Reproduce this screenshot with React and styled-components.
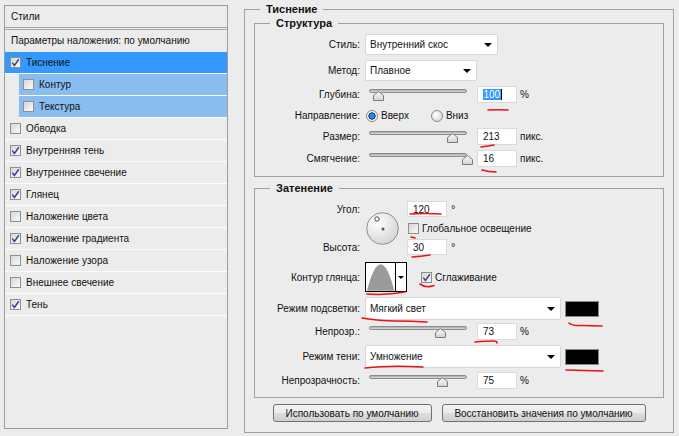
import React from 'react';
import styled, { createGlobalStyle } from 'styled-components';

const GlobalStyle = createGlobalStyle`
  html, body {
    margin: 0;
    padding: 0;
    background: #ececec;
  }
  body {
    font-family: "Liberation Sans", Arial, sans-serif;
    font-size: 10px;
    color: #111;
  }
  #root {
    width: 679px;
    height: 436px;
    overflow: hidden;
  }
`;

const EFFECTS = [
  { label: 'Тиснение', checked: true, active: true },
  { label: 'Контур', checked: false, sub: true },
  { label: 'Текстура', checked: false, sub: true },
  { label: 'Обводка', checked: false },
  { label: 'Внутренняя тень', checked: true },
  { label: 'Внутреннее свечение', checked: true },
  { label: 'Глянец', checked: true },
  { label: 'Наложение цвета', checked: false },
  { label: 'Наложение градиента', checked: true },
  { label: 'Наложение узора', checked: false },
  { label: 'Внешнее свечение', checked: false },
  { label: 'Тень', checked: true },
];

// red hand-drawn marks over the screenshot
const MARKS = [
  'M488 110 Q498 109.5 508 110',
  'M481 147 Q488 146 494 145',
  'M482 170 Q489 172 496 172',
  'M410 214 Q426 213 441 214',
  'M411 237 L415 238',
  'M412 257 Q421 256.5 430 255',
  'M420 284 Q426 288.5 434 285.5',
  'M367 294 Q386 295.5 405 292',
  'M362 318 Q380 321 395 321 Q412 321 427 322',
  'M569 323 Q572 326 582 325.5 L602 326',
  'M475 342 Q487 341 494 341 Q497 341 497 343',
  'M365 368 Q390 365 423 367',
  'M566 370 L603 371',
];

const Page = styled.div`
  position: relative;
  display: flex;
  align-items: flex-start;
  gap: 16px;
  width: 679px;
  height: 436px;
  box-sizing: border-box;
  padding: 2px 5px 0 4px;
`;

/* ---------- left list ---------- */

const StylesPanel = styled.div`
  width: 224px;
  height: 424px;
  margin-top: 3px;
  box-sizing: border-box;
  border: 1px solid #9c9c9c;
  flex-shrink: 0;
`;

const PanelHeader = styled.div`
  height: 21px;
  line-height: 21px;
  padding-left: 6px;
  border-bottom: 3px double #a4a4a4;
`;

const PresetRow = styled.div`
  height: 22px;
  line-height: 22px;
  padding-left: 6px;
`;

const EffectRow = styled.div`
  display: flex;
  align-items: center;
  gap: 5px;
  height: 21px;
  border-bottom: 1px solid #fbfbfb;
  margin-left: ${p => (p.$sub ? '14px' : '0')};
  padding-left: ${p => (p.$sub ? '4px' : '5px')};
  background: ${p => (p.$active ? '#3399ff' : p.$sub ? '#89bdf0' : 'transparent')};
`;

const Box = styled.span`
  display: inline-flex;
  align-items: center;
  justify-content: center;
  width: 11px;
  height: 11px;
  box-sizing: border-box;
  border: 1px solid #8e8f8f;
  background: linear-gradient(135deg, #d6d6d6, #fbfbfb);
  flex-shrink: 0;
`;

function Checkbox({ checked }) {
  return (
    <Box>
      {checked && (
        <svg width="9" height="9" viewBox="0 0 9 9">
          <path d="M1.3 4.6 L3.4 7.4 L7.8 1.2" fill="none" stroke="#33419a" strokeWidth="1.5" />
        </svg>
      )}
    </Box>
  );
}

/* ---------- right side ---------- */

const Group = styled.fieldset`
  margin: ${p => p.$margin || '0'};
  padding: ${p => p.$pad};
  border: 1px solid #a0a0a0;
  min-width: 0;
  box-sizing: border-box;
  width: ${p => p.$width || 'auto'};
  flex-shrink: 0;
`;

const Legend = styled.legend`
  font-weight: bold;
  font-size: 11px;
  line-height: 14px;
  padding: 0 6px;
  margin-left: ${p => p.$offset}px;
`;

const Row = styled.div`
  display: flex;
  align-items: center;
  height: ${p => p.$h}px;
  margin-top: ${p => p.$mt || 0}px;
`;

const Label = styled.span`
  width: 105px;
  padding-right: 5px;
  text-align: right;
  flex-shrink: 0;
  white-space: nowrap;
`;

const Dropdown = styled.div`
  display: flex;
  align-items: center;
  justify-content: space-between;
  width: ${p => p.$w}px;
  height: ${p => p.$h}px;
  box-sizing: border-box;
  padding: 0 4px 0 4px;
  background: #fff;
  border: 1px solid #d6d6d6;
  border-radius: 2px;
`;

const Arrow = styled.span`
  width: 0;
  height: 0;
  border-left: 4px solid transparent;
  border-right: 4px solid transparent;
  border-top: 4px solid #000;
  margin-right: 1px;
`;

function Select({ value, w, h = 21 }) {
  return (
    <Dropdown $w={w} $h={h}>
      <span>{value}</span>
      <Arrow />
    </Dropdown>
  );
}

const NumField = styled.div`
  display: flex;
  align-items: center;
  width: 40px;
  height: ${p => p.$h || 17}px;
  box-sizing: border-box;
  padding-left: 5px;
  background: #fff;
  border: 1px solid #dadada;
  flex-shrink: 0;
`;

const Selected = styled.span`
  background: #3399ff;
  color: #fff;
  padding: 0 0.5px;
`;

const Caret = styled.span`
  width: 1px;
  height: 11px;
  background: #000;
`;

const Unit = styled.span`
  margin-left: 3px;
`;

const SliderBox = styled.div`
  position: relative;
  width: 112px;
  height: 17px;
  flex-shrink: 0;
`;

const Track = styled.div`
  width: 98px;
  height: 4px;
  margin: 3px 0 0 4px;
  border: 1px solid #8c8c8c;
  border-radius: 3px;
  box-sizing: border-box;
  background: linear-gradient(#a9a9a9, #dedede);
`;

const Thumb = styled.svg`
  position: absolute;
  top: 5px;
`;

function Slider({ value, max }) {
  const center = 4 + (value / max) * 98;
  return (
    <SliderBox>
      <Track />
      <Thumb width="11" height="10" viewBox="0 0 11 10" style={{ left: `${center - 5.5}px` }}>
        <defs>
          <linearGradient id="thumbFill" x1="0" y1="0" x2="0" y2="1">
            <stop offset="0" stopColor="#fdfdfd" />
            <stop offset="1" stopColor="#d2d2d2" />
          </linearGradient>
        </defs>
        <polygon points="5.5,0.5 10.5,4.5 10.5,9.5 0.5,9.5 0.5,4.5" fill="url(#thumbFill)" stroke="#7d7d7d" />
      </Thumb>
    </SliderBox>
  );
}

function SliderRow({ label, value, max, unit, mt, selected }) {
  return (
    <Row $h={17} $mt={mt}>
      <Label>{label}</Label>
      <Slider value={value} max={max} />
      <NumField>
        {selected ? (
          <>
            <Selected>{value}</Selected>
            <Caret />
          </>
        ) : (
          value
        )}
      </NumField>
      <Unit>{unit}</Unit>
    </Row>
  );
}

const RadioDot = styled.span`
  width: 12px;
  height: 12px;
  border-radius: 50%;
  box-sizing: border-box;
  border: 1px solid #8a8a8a;
  flex-shrink: 0;
  margin-left: ${p => p.$ml || 0}px;
  background: ${p =>
    p.$checked
      ? 'radial-gradient(circle, #2a86e6 0 2.4px, #0d3f86 2.9px 3.4px, #f6f6f6 3.9px)'
      : 'radial-gradient(circle at 40% 35%, #ffffff, #cfcfcf)'};
`;

const OptionText = styled.span`
  margin-left: ${p => p.$ml || 3}px;
`;

const AngleGrid = styled.div`
  display: grid;
  grid-template-columns: 110px 42px 1fr;
  grid-template-rows: 16px 14px 16px;
  row-gap: 4px;
  align-items: center;
`;

const GridLabel = styled(Label)`
  grid-column: 1;
  grid-row: ${p => p.$row};
`;

const Dial = styled.svg`
  grid-column: 2;
  grid-row: 1 / 4;
  margin-left: 1px;
`;

const GridCell = styled.div`
  grid-column: 3;
  grid-row: ${p => p.$row};
  display: flex;
  align-items: center;
  padding-left: ${p => p.$pl || 0}px;
`;

const Degree = styled.span`
  margin-left: 4px;
  font-size: 11px;
`;

const ContourPicker = styled.div`
  display: flex;
  width: 42px;
  height: 30px;
  box-sizing: border-box;
  border: 1px solid #000;
  background: #fff;
  flex-shrink: 0;
`;

const ContourMenu = styled.div`
  display: flex;
  align-items: center;
  justify-content: center;
  width: 10px;
  border-left: 1px solid #000;
`;

const SmallArrow = styled.span`
  width: 0;
  height: 0;
  border-left: 3px solid transparent;
  border-right: 3px solid transparent;
  border-top: 3px solid #000;
`;

const Spacer = styled.span`
  width: ${p => p.$w}px;
  flex-shrink: 0;
`;

const Swatch = styled.div`
  width: 34px;
  height: 16px;
  margin-left: 4px;
  box-sizing: border-box;
  border: 1px solid #8a8a8a;
  background: #000;
`;

const Buttons = styled.div`
  display: flex;
  justify-content: center;
  gap: 10px;
  margin-top: 6px;
`;

const Button = styled.button`
  height: 18px;
  width: ${p => p.$w}px;
  padding: 0;
  font: inherit;
  color: #111;
  border: 1px solid #707070;
  border-radius: 3px;
  background: linear-gradient(#f3f3f3, #ebebeb 48%, #dddddd 52%, #cfcfcf);
`;

const Marks = styled.svg`
  position: absolute;
  left: 0;
  top: 0;
  pointer-events: none;
`;

export default function App() {
  return (
    <>
      <GlobalStyle />
      <Page>
        <StylesPanel>
          <PanelHeader>Стили</PanelHeader>
          <PresetRow>Параметры наложения: по умолчанию</PresetRow>
          {EFFECTS.map(e => (
            <EffectRow key={e.label} $active={e.active} $sub={e.sub}>
              <Checkbox checked={e.checked} />
              <span>{e.label}</span>
            </EffectRow>
          ))}
        </StylesPanel>

        <Group $width="430px" $pad="0 9px 10px 9px">
          <Legend $offset={6}>Тиснение</Legend>

          <Group $pad="4px 0 9px 0">
            <Legend $offset={15}>Структура</Legend>
            <Row $h={21}>
              <Label>Стиль:</Label>
              <Select value="Внутренний скос" w={133} />
            </Row>
            <Row $h={21} $mt={5}>
              <Label>Метод:</Label>
              <Select value="Плавное" w={112} />
            </Row>
            <SliderRow label="Глубина:" value={100} max={1000} unit="%" mt={5} selected />
            <Row $h={15} $mt={5}>
              <Label>Направление:</Label>
              <RadioDot $checked $ml={1} />
              <OptionText>Вверх</OptionText>
              <RadioDot $ml={22} />
              <OptionText>Вниз</OptionText>
            </Row>
            <SliderRow label="Размер:" value={213} max={250} unit="пикс." mt={5} />
            <SliderRow label="Смягчение:" value={16} max={16} unit="пикс." mt={5} />
          </Group>

          <Group $pad="6px 0 8px 0" $margin="4px 0 0 0">
            <Legend $offset={15}>Затенение</Legend>
            <AngleGrid>
              <GridLabel $row={1}>Угол:</GridLabel>
              <Dial width="33" height="33" viewBox="0 0 33 33">
                <defs>
                  <radialGradient id="dialFill" cx="0.35" cy="0.3" r="0.8">
                    <stop offset="0" stopColor="#ffffff" />
                    <stop offset="1" stopColor="#d2d2d2" />
                  </radialGradient>
                </defs>
                <circle cx="16.5" cy="16.5" r="15.8" fill="url(#dialFill)" stroke="#8c8c8c" />
                <circle cx="11" cy="7" r="2.2" fill="#fff" stroke="#333" strokeWidth="0.9" />
                <circle cx="17" cy="17" r="1.5" fill="#555" />
              </Dial>
              <GridCell $row={1}>
                <NumField $h={16}>120</NumField>
                <Degree>°</Degree>
              </GridCell>
              <GridCell $row={2} $pl={1}>
                <Checkbox checked={false} />
                <OptionText>Глобальное освещение</OptionText>
              </GridCell>
              <GridLabel $row={3}>Высота:</GridLabel>
              <GridCell $row={3}>
                <NumField $h={16}>30</NumField>
                <Degree>°</Degree>
              </GridCell>
            </AngleGrid>

            <Row $h={30} $mt={7}>
              <Label>Контур глянца:</Label>
              <ContourPicker>
                <svg width="30" height="28" viewBox="0 0 30 28">
                  <path d="M1 28 Q15 -26 29 28 Z" fill="#9b9b9b" />
                </svg>
                <ContourMenu>
                  <SmallArrow />
                </ContourMenu>
              </ContourPicker>
              <Spacer $w={14} />
              <Checkbox checked />
              <OptionText>Сглаживание</OptionText>
            </Row>

            <Row $h={23} $mt={5}>
              <Label>Режим подсветки:</Label>
              <Select value="Мягкий свет" w={196} h={23} />
              <Swatch />
            </Row>
            <SliderRow label="Непрозр.:" value={73} max={100} unit="%" mt={3} />
            <Row $h={23} $mt={5}>
              <Label>Режим тени:</Label>
              <Select value="Умножение" w={196} h={23} />
              <Swatch />
            </Row>
            <SliderRow label="Непрозрачность:" value={75} max={100} unit="%" mt={4} />
          </Group>

          <Buttons>
            <Button $w={159}>Использовать по умолчанию</Button>
            <Button $w={204}>Восстановить значения по умолчанию</Button>
          </Buttons>
        </Group>

        <Marks width="679" height="436" viewBox="0 0 679 436">
          {MARKS.map(d => (
            <path key={d} d={d} fill="none" stroke="#e8121a" strokeWidth="1.6" strokeLinecap="round" />
          ))}
        </Marks>
      </Page>
    </>
  );
}
